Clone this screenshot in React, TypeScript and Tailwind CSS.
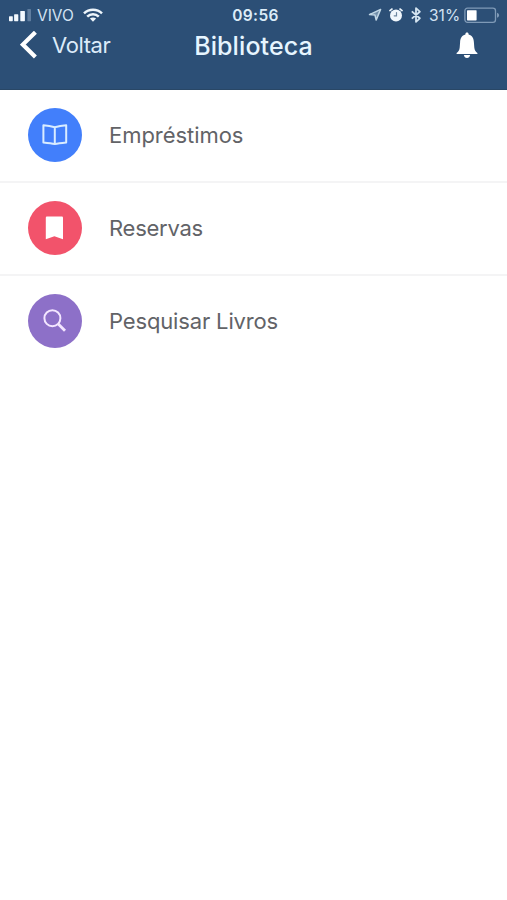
import type { ReactNode } from "react"

type MenuItem = {
  label: string
  color: string
  tracking: string
  icon: ReactNode
}

function SignalIcon() {
  return (
    <svg width="23" height="14" viewBox="0 0 23 14" fill="#f3f9ff">
      <rect x="0" y="8.2" width="3.8" height="5" rx="0.6" />
      <rect x="5.1" y="6.3" width="4.2" height="6.9" rx="0.6" />
      <rect x="11.3" y="3" width="4.6" height="10.2" rx="0.6" />
      <rect x="18.4" y="1" width="3.6" height="12.2" rx="0.6" fill="#5f7d9f" />
    </svg>
  )
}

function WifiIcon() {
  return (
    <svg width="20" height="14" viewBox="0 0 20 14" fill="none" stroke="#eef6fc" strokeWidth="2.5">
      <path d="M1 5.3C6 0.5 14 0.5 19 5.3" />
      <path d="M4.2 8.6C7.5 5.4 12.5 5.4 15.8 8.6" />
      <path d="M6.9 10.6C8.7 9 11.3 9 13.1 10.6L10 13.7Z" fill="#eef6fc" stroke="none" />
    </svg>
  )
}

function LocationIcon() {
  return (
    <svg width="14" height="14" viewBox="0 0 14 14" fill="none" stroke="#c2d7e6" strokeWidth="1.5" strokeLinejoin="round">
      <path d="M12.6 1.4L1.5 6.6L7 7.1L8.2 12Z" />
      <path d="M12.6 1.4L7 7.1L8.2 12Z" fill="#c2d7e6" fillOpacity="0.5" stroke="none" />
      <path d="M12.6 1.4L1.5 6.6L7 7.1Z" fill="#c2d7e6" fillOpacity="0.5" stroke="none" />
    </svg>
  )
}

function AlarmIcon() {
  return (
    <svg width="14" height="14" viewBox="0 0 14 14" fill="none" stroke="#eaf3fa" strokeLinecap="round">
      <circle cx="7" cy="7.4" r="6" fill="#f1f7fc" stroke="none" />
      <path d="M0.9 2.6L3 1M13.1 2.6L11 1" strokeWidth="1.6" />
      <path d="M7.5 4.6V7.8H5.2" stroke="#6f879f" strokeWidth="1.2" />
    </svg>
  )
}

function BluetoothIcon() {
  return (
    <svg width="10" height="16" viewBox="0 0 10 16" fill="none" stroke="#d5e5f1" strokeWidth="1.8" strokeLinejoin="round">
      <path d="M0.8 4.4L8.8 11.3L5 14.8V1.2L8.8 4.7L0.8 11.6" />
    </svg>
  )
}

function BatteryIcon() {
  return (
    <svg width="36" height="17" viewBox="0 0 36 17">
      <rect x="0.9" y="1.1" width="30.6" height="14.2" rx="2.6" fill="none" stroke="#7f9ab7" strokeWidth="1.3" />
      <rect x="3" y="3.2" width="9.6" height="10.2" rx="0.6" fill="#ffffff" />
      <path d="M33 5.7C35.8 6.6 35.8 9.8 33 10.7Z" fill="#7f9ab7" />
    </svg>
  )
}

function BellIcon() {
  return (
    <svg width="22" height="27" viewBox="0 0 22 27" fill="#ffffff">
      <path d="M11 0.6C12 0.6 12.6 1.2 12.6 2.5C16.2 3.3 17.7 6.3 17.9 10.2L18.3 15.6C18.5 18.2 19.6 19.8 21.4 21V22H0.6V21C2.4 19.8 3.5 18.2 3.7 15.6L4.1 10.2C4.3 6.3 5.8 3.3 9.4 2.5C9.4 1.2 10 0.6 11 0.6Z" />
      <path d="M7.9 23.1H14.1C13.8 25 12.7 26 11 26C9.3 26 8.2 25 7.9 23.1Z" />
    </svg>
  )
}

const items: MenuItem[] = [
  {
    label: "Empréstimos",
    color: "bg-[#427ffb]",
    tracking: "tracking-[-0.05px]",
    icon: (
      <svg width="26" height="22" viewBox="0 0 26 22" fill="none" stroke="#d9ecff" strokeWidth="2" strokeLinejoin="round">
        <path d="M12.8 3.3C9.4 2.4 5.4 1.7 1.4 1.3V18.4C5.4 18.8 9.4 19.2 12.8 20.1C16.2 19.2 20.2 18.8 24.2 18.4V1.3C20.2 1.7 16.2 2.4 12.8 3.3ZM12.8 3.3V20.1" />
      </svg>
    ),
  },
  {
    label: "Reservas",
    color: "bg-[#f2536b]",
    tracking: "tracking-[-0.25px]",
    icon: (
      <svg width="20" height="24" viewBox="0 0 20 24" fill="#ffffff">
        <path d="M2.2 0.5H16.6C17.5 0.5 18 1 18 1.9V23.2L9.4 20.2L0.8 23.2V1.9C0.8 1 1.3 0.5 2.2 0.5Z" />
      </svg>
    ),
  },
  {
    label: "Pesquisar Livros",
    color: "bg-[#8d70c8]",
    tracking: "tracking-[-0.15px]",
    icon: (
      <svg width="24" height="24" viewBox="0 0 24 24" fill="none" stroke="#f3e6ff">
        <circle cx="9.4" cy="9.2" r="8" strokeWidth="2" />
        <path d="M15 14.8L22 21.8" strokeWidth="2.8" />
      </svg>
    ),
  },
]

function StatusBar() {
  return (
    <div className="grid h-[30px] grid-cols-3 items-center text-[15.5px] leading-none text-[#d3e3f2]">
      <div className="flex items-center pl-[9px]">
        <SignalIcon />
        <span className="ml-[5px] w-[46px] pt-px">VIVO</span>
        <WifiIcon />
      </div>
      <span className="pt-px pl-1 text-center font-semibold tracking-[0.4px] text-[#dcecf8]">09:56</span>
      <div className="flex items-center justify-end pr-[7px]">
        <LocationIcon />
        <span className="ml-[7px]"><AlarmIcon /></span>
        <span className="ml-2"><BluetoothIcon /></span>
        <span className="ml-2 w-[35px] whitespace-nowrap pt-px">31%</span>
        <BatteryIcon />
      </div>
    </div>
  )
}

export default function App() {
  return (
    <main className="min-h-screen bg-white font-['Inter','Liberation_Sans',sans-serif]">

      {/* Header */}
      <header className="h-[90px] border-b border-[#294766] bg-[#2c4f76]">
        <StatusBar />
        <div className="grid h-[30px] grid-cols-3 items-center leading-none">
          <button className="flex items-center pl-5 text-[22px] text-[#dcebf9]">
            <svg width="18" height="28" viewBox="0 0 18 28" fill="none" stroke="#ffffff" strokeWidth="4.2">
              <path d="M15.4 1.2L2.8 13.6L15.4 26" />
            </svg>
            <span className="ml-[14px] tracking-[-0.4px]">Voltar</span>
          </button>
          <h1 className="pt-0.5 text-center text-[25px] font-medium tracking-[0.1px] text-[#e6f5ff]">Biblioteca</h1>
          <button className="flex justify-end pr-[29px]">
            <BellIcon />
          </button>
        </div>
      </header>

      {/* Menu */}
      <ul>
        {items.map((item) => (
          <li
            key={item.label}
            className="flex h-[93px] items-center border-b-2 border-[#f4f4f5] pb-px pl-7 last:border-transparent"
          >
            <span className={`flex size-[54px] items-center justify-center rounded-full ${item.color}`}>
              {item.icon}
            </span>
            <span className={`ml-[27px] text-[22px] text-[#626367] ${item.tracking}`}>{item.label}</span>
          </li>
        ))}
      </ul>

    </main>
  )
}
